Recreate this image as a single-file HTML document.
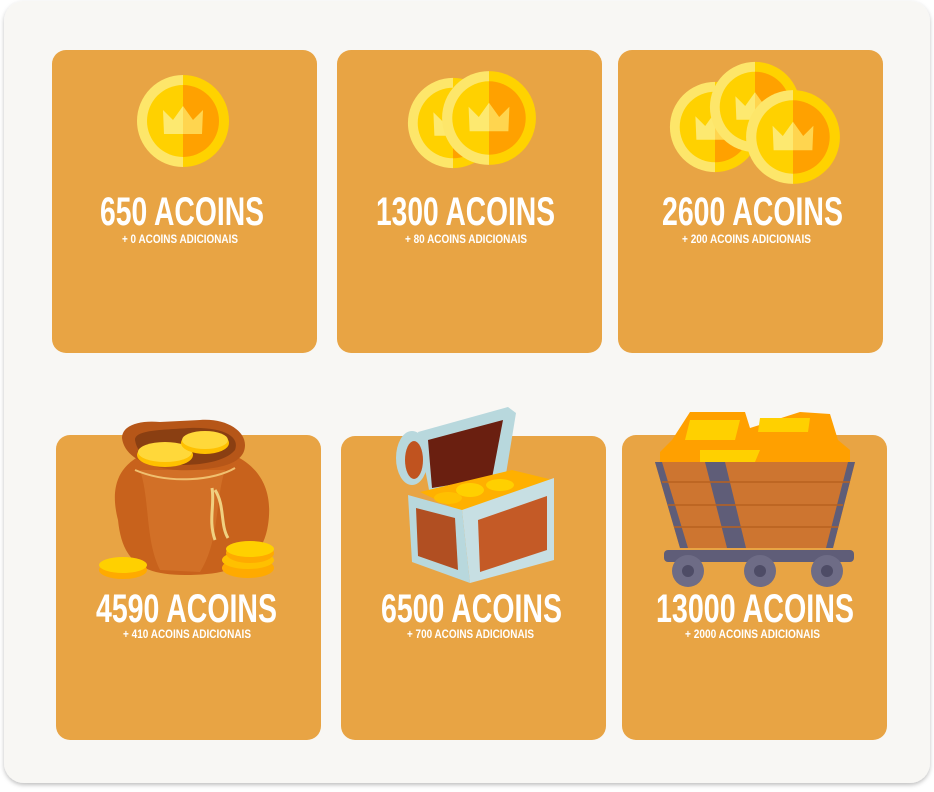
<!DOCTYPE html>
<html><head><meta charset="utf-8"><style>
html,body{margin:0;padding:0;background:#fff;width:934px;height:792px;overflow:hidden}
svg{display:block}
text{font-family:"Liberation Sans Narrow","Liberation Sans",sans-serif;font-weight:bold;fill:#fff}
</style></head><body>
<svg width="934" height="792" viewBox="0 0 934 792" xmlns="http://www.w3.org/2000/svg">
<defs>
<filter id="sh" x="-5%" y="-5%" width="110%" height="110%"><feDropShadow dx="0" dy="2" stdDeviation="2" flood-color="#000" flood-opacity="0.25"/></filter>
<g id="coin">
<path d="M0,-46A46,46 0 0 0 0,46Z" fill="#fde66a"/>
<path d="M0,-46A46,46 0 0 1 0,46Z" fill="#ffd200"/>
<path d="M0,-36A36,36 0 0 0 0,36Z" fill="#ffd100"/>
<path d="M0,-36A36,36 0 0 1 0,36Z" fill="#ffa100"/>
<path d="M-20,-11L-10,-1L0,-15L0,13L-19,13Z" fill="#fde970"/>
<path d="M20,-11L10,-1L0,-15L0,13L19,13Z" fill="#ffd54f"/>
</g>
</defs>
<rect x="4" y="1" width="926" height="782" rx="20" fill="#f8f7f4" filter="url(#sh)"/>
<g fill="#e8a444">
<rect x="52" y="50" width="265" height="303" rx="14"/>
<rect x="337" y="50" width="265" height="303" rx="14"/>
<rect x="618" y="50" width="265" height="303" rx="14"/>
<rect x="56" y="435" width="265" height="305" rx="14"/>
<rect x="341" y="436" width="265" height="304" rx="14"/>
<rect x="622" y="435" width="265" height="305" rx="14"/>
</g>
<!-- coins -->
<use href="#coin" x="183" y="121"/>
<use href="#coin" transform="translate(453,123) scale(0.98)"/>
<use href="#coin" transform="translate(489,118) scale(1.02)"/>
<use href="#coin" transform="translate(715,127) scale(0.98)"/>
<use href="#coin" transform="translate(755,107) scale(0.98)"/>
<use href="#coin" transform="translate(793,137) scale(1.02)"/>
<!-- bag -->
<g>
<path d="M118,520 C105,470 135,455 160,448 L210,448 C250,455 275,480 268,525 C262,565 230,575 185,575 C140,575 122,560 118,520Z" fill="#c8621c"/>
<path d="M140,470 C150,500 145,540 160,570 L200,572 C220,540 215,500 225,470Z" fill="#d97a2e" opacity="0.6"/>
<path d="M122,438 C122,425 140,420 160,422 L200,420 C225,418 245,430 245,445 C245,462 225,468 195,470 C160,472 125,462 122,438Z" fill="#b65618"/>
<path d="M135,440 C135,430 160,430 190,428 C225,427 240,437 235,450 C225,462 200,465 180,465 C155,465 138,458 135,440Z" fill="#8a3f12"/>
<ellipse cx="165" cy="455" rx="28" ry="12" fill="#ffc000"/>
<ellipse cx="165" cy="452" rx="27" ry="10" fill="#ffd83a"/>
<ellipse cx="205" cy="443" rx="24" ry="11" fill="#ffc000"/>
<ellipse cx="205" cy="440" rx="23" ry="9" fill="#ffd83a"/>
<path d="M135,470 C170,485 215,480 235,468" stroke="#f0c070" stroke-width="2" fill="none"/>
<path d="M212,488 C215,505 208,520 215,540 M215,490 C225,505 220,525 228,538" stroke="#f0d080" stroke-width="3" fill="none"/>
<ellipse cx="123" cy="570" rx="24" ry="9" fill="#ffaa00"/>
<ellipse cx="123" cy="565" rx="24" ry="8" fill="#ffd000"/>
<ellipse cx="248" cy="568" rx="26" ry="10" fill="#ffaa00"/>
<ellipse cx="248" cy="560" rx="26" ry="9" fill="#ffc000"/>
<ellipse cx="250" cy="553" rx="24" ry="10" fill="#ffaa00"/>
<ellipse cx="250" cy="549" rx="24" ry="8" fill="#ffd000"/>
</g>
<!-- chest -->
<g>
<path d="M418,432 L508,407 L516,413 L505,480 L430,495Z" fill="#b8d8dd"/>
<path d="M428,440 L503,420 L492,478 L432,488Z" fill="#6a1f10"/>
<ellipse cx="412" cy="458" rx="16" ry="27" fill="#b8d8dd"/>
<ellipse cx="414" cy="460" rx="9" ry="19" fill="#c0531f"/>
<path d="M420,492 L512,470 L553,480 L462,512Z" fill="#ffb000"/>
<ellipse cx="470" cy="490" rx="14" ry="7" fill="#ffd000"/>
<ellipse cx="500" cy="485" rx="14" ry="6" fill="#ffd000"/>
<ellipse cx="448" cy="498" rx="14" ry="6" fill="#ffc000"/>
<path d="M408,495 L462,510 L470,583 L412,562Z" fill="#b8d8dd"/>
<path d="M462,510 L554,478 L554,560 L470,583Z" fill="#c7dfe3"/>
<path d="M416,508 L455,518 L458,570 L418,556Z" fill="#b14f22"/>
<path d="M478,520 L547,496 L547,550 L480,572Z" fill="#c45a26"/>
</g>
<!-- cart -->
<g>
<path d="M672,440 L690,412 L745,412 L750,428 L800,412 L830,414 L838,440 L850,450 L850,465 L660,465 L660,452Z" fill="#ffa000"/>
<path d="M690,420 L740,420 L735,440 L685,440Z M760,418 L810,418 L808,432 L758,432Z M700,450 L760,450 L755,462 L700,462Z" fill="#ffd000"/>
<path d="M655,462 L855,462 L833,548 L680,548Z" fill="#cd7530"/>
<path d="M705,462 L725,462 L746,548 L727,548Z" fill="#5f5d78"/>
<path d="M655,462 L662,462 L688,548 L680,548Z M848,462 L855,462 L833,548 L826,548Z" fill="#5f5d78"/>
<path d="M662,482 L850,482 M668,505 L843,505 M674,527 L838,527" stroke="#b8611f" stroke-width="1.5"/>
<rect x="664" y="550" width="190" height="12" rx="4" fill="#5f5d78"/>
<circle cx="688" cy="571" r="16" fill="#6e6c86"/><circle cx="688" cy="571" r="6" fill="#4e4c66"/>
<circle cx="760" cy="571" r="16" fill="#6e6c86"/><circle cx="760" cy="571" r="6" fill="#4e4c66"/>
<circle cx="827" cy="571" r="16" fill="#6e6c86"/><circle cx="827" cy="571" r="6" fill="#4e4c66"/>
</g>
<!-- text -->
<text x="100" y="225" textLength="164" lengthAdjust="spacingAndGlyphs" font-size="40">650 ACOINS</text>
<text x="122" y="243" textLength="116" lengthAdjust="spacingAndGlyphs" font-size="12">+ 0 ACOINS ADICIONAIS</text>
<text x="376" y="225" textLength="179" lengthAdjust="spacingAndGlyphs" font-size="40">1300 ACOINS</text>
<text x="405" y="243" textLength="122" lengthAdjust="spacingAndGlyphs" font-size="12">+ 80 ACOINS ADICIONAIS</text>
<text x="662" y="225" textLength="181" lengthAdjust="spacingAndGlyphs" font-size="40">2600 ACOINS</text>
<text x="682" y="243" textLength="129" lengthAdjust="spacingAndGlyphs" font-size="12">+ 200 ACOINS ADICIONAIS</text>
<text x="96" y="622" textLength="181" lengthAdjust="spacingAndGlyphs" font-size="40">4590 ACOINS</text>
<text x="123" y="638" textLength="128" lengthAdjust="spacingAndGlyphs" font-size="12">+ 410 ACOINS ADICIONAIS</text>
<text x="381" y="622" textLength="181" lengthAdjust="spacingAndGlyphs" font-size="40">6500 ACOINS</text>
<text x="407" y="638" textLength="127" lengthAdjust="spacingAndGlyphs" font-size="12">+ 700 ACOINS ADICIONAIS</text>
<text x="656" y="622" textLength="198" lengthAdjust="spacingAndGlyphs" font-size="40">13000 ACOINS</text>
<text x="685" y="638" textLength="135" lengthAdjust="spacingAndGlyphs" font-size="12">+ 2000 ACOINS ADICIONAIS</text>
</svg>
</body></html>
